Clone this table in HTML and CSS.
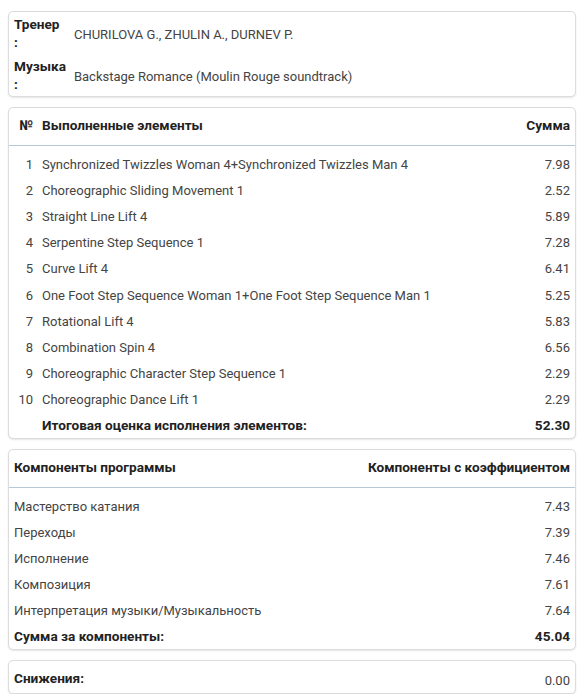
FILE: index.html
```html
<!DOCTYPE html>
<html lang="ru">
<head>
<meta charset="utf-8">
<link rel="stylesheet" href="styles.css">
</head>
<body>
<div class="page">
  <section class="card info">
    <div class="info-label">Тренер :</div>
    <div class="info-value">CHURILOVA G., ZHULIN A., DURNEV P.</div>
    <div class="info-label">Музыка :</div>
    <div class="info-value">Backstage Romance (Moulin Rouge soundtrack)</div>
  </section>

  <section class="card">
    <table class="grid">
      <thead>
        <tr><th class="num">№</th><th class="name">Выполненные элементы</th><th class="val">Сумма</th></tr>
      </thead>
      <tbody>
        <tr class="first"><td class="num">1</td><td class="name">Synchronized Twizzles Woman 4+Synchronized Twizzles Man 4</td><td class="val">7.98</td></tr>
        <tr><td class="num">2</td><td class="name">Choreographic Sliding Movement 1</td><td class="val">2.52</td></tr>
        <tr><td class="num">3</td><td class="name">Straight Line Lift 4</td><td class="val">5.89</td></tr>
        <tr><td class="num">4</td><td class="name">Serpentine Step Sequence 1</td><td class="val">7.28</td></tr>
        <tr><td class="num">5</td><td class="name">Curve Lift 4</td><td class="val">6.41</td></tr>
        <tr><td class="num">6</td><td class="name">One Foot Step Sequence Woman 1+One Foot Step Sequence Man 1</td><td class="val">5.25</td></tr>
        <tr><td class="num">7</td><td class="name">Rotational Lift 4</td><td class="val">5.83</td></tr>
        <tr><td class="num">8</td><td class="name">Combination Spin 4</td><td class="val">6.56</td></tr>
        <tr><td class="num">9</td><td class="name">Choreographic Character Step Sequence 1</td><td class="val">2.29</td></tr>
        <tr><td class="num">10</td><td class="name">Choreographic Dance Lift 1</td><td class="val">2.29</td></tr>
        <tr class="total"><td class="num"></td><td class="name">Итоговая оценка исполнения элементов:</td><td class="val">52.30</td></tr>
      </tbody>
    </table>
  </section>

  <section class="card">
    <table class="grid">
      <thead>
        <tr><th class="name first-col">Компоненты программы</th><th class="val">Компоненты с коэффициентом</th></tr>
      </thead>
      <tbody>
        <tr class="first"><td class="name first-col">Мастерство катания</td><td class="val">7.43</td></tr>
        <tr><td class="name first-col">Переходы</td><td class="val">7.39</td></tr>
        <tr><td class="name first-col">Исполнение</td><td class="val">7.46</td></tr>
        <tr><td class="name first-col">Композиция</td><td class="val">7.61</td></tr>
        <tr><td class="name first-col">Интерпретация музыки/Музыкальность</td><td class="val">7.64</td></tr>
        <tr class="total"><td class="name first-col">Сумма за компоненты:</td><td class="val">45.04</td></tr>
      </tbody>
    </table>
  </section>

  <section class="card deductions">
    <div class="ded-label">Снижения:</div>
    <div class="ded-value">0.00</div>
  </section>
</div>
</body>
</html>
```

FILE: styles.css
```css
html, body {
  margin: 0;
  padding: 0;
  background: #fff;
}
body {
  font-family: Roboto, "Noto Sans", sans-serif;
  font-size: 13px;
  color: #444;
}
.page {
  padding: 11px 7px 0 8px;
  display: flex;
  flex-direction: column;
  gap: 10px;
}
.card {
  border: 1px solid #dcdcdc;
  border-radius: 5px;
  box-shadow: 0 1px 2px rgba(0,0,0,0.10);
  background: #fff;
}
.info-label, .grid th, .grid tr.total td, .ded-label {
  font-weight: 700;
  font-size: 13.6px;
  color: #222;
}
.info {
  display: grid;
  grid-template-columns: min-content 1fr;
  column-gap: 8px;
  row-gap: 6px;
  padding: 3px 5px 3px 5px;
}
.info-label {
  line-height: 18px;
}
.info-value {
  padding-top: 11px;
  line-height: 18px;
}
.grid {
  width: 100%;
  border-collapse: collapse;
}
.grid th {
  line-height: 18px;
  padding: 8px 5px 11px 5px;
  border-bottom: 1px solid #b7c9d6;
  text-align: left;
}
.grid td {
  height: 26.1px;
  padding: 0 5px;
  line-height: 16px;
}
.grid tr.first td {
  padding-top: 6px;
}
.grid tr.total td {
  height: 24px;
  padding-bottom: 1px;
}
.grid .num {
  width: 19px;
  text-align: right;
  padding-right: 0;
  white-space: nowrap;
}
.grid .name {
  padding-left: 9px;
}
.grid .name.first-col {
  padding-left: 5px;
}
.grid th.val, .grid td.val {
  text-align: right;
  white-space: nowrap;
}
.deductions {
  display: flex;
  justify-content: space-between;
  align-items: flex-start;
  padding: 8px 5px 3px 5px;
}
.ded-label {
  line-height: 18px;
}
.ded-value {
  line-height: 18px;
  padding-top: 3px;
}
```
